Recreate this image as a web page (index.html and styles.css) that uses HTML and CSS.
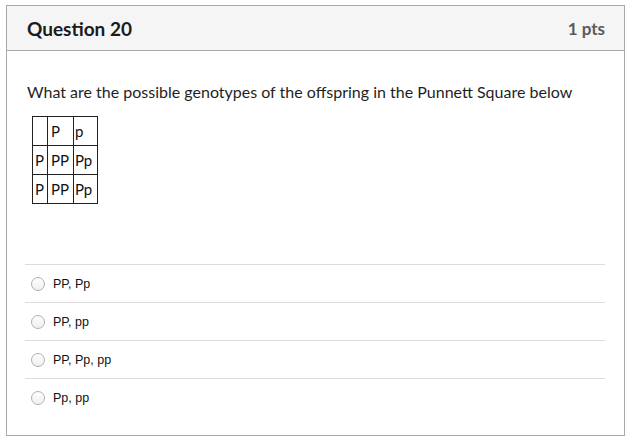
FILE: index.html
```html
<!DOCTYPE html>
<html>
<head>
<meta charset="utf-8">
<link rel="stylesheet" href="styles.css">
</head>
<body>
<div class="question">
  <div class="header">
    <h2 class="title">Question 20</h2>
    <span class="pts">1 pts</span>
  </div>
  <div class="body">
    <p class="prompt">What are the possible genotypes of the offspring in the Punnett Square below</p>
    <table class="punnett">
      <tr><td></td><td>P</td><td>p</td></tr>
      <tr><td>P</td><td>PP</td><td>Pp</td></tr>
      <tr><td>P</td><td>PP</td><td>Pp</td></tr>
    </table>
    <div class="answers">
      <label class="answer"><span class="radio"></span><span class="atext">PP, Pp</span></label>
      <label class="answer"><span class="radio"></span><span class="atext">PP, pp</span></label>
      <label class="answer"><span class="radio"></span><span class="atext">PP, Pp, pp</span></label>
      <label class="answer"><span class="radio"></span><span class="atext">Pp, pp</span></label>
    </div>
  </div>
</div>
</body>
</html>
```
FILE: styles.css
```css
html, body {
  margin: 0;
  padding: 0;
  background: #fff;
}
body {
  padding: 5px 0 0 6px;
  font-family: Lato, "Liberation Sans", sans-serif;
  color: #2d3b45;
}
.question {
  width: 619px;
  height: 431px;
  box-sizing: border-box;
  border: 1px solid #a8a8a8;
  display: flex;
  flex-direction: column;
}
.header {
  height: 45px;
  box-sizing: border-box;
  background: #f5f5f5;
  border-bottom: 1px solid #a8a8a8;
  display: flex;
  align-items: center;
  justify-content: space-between;
  padding: 0 19px 0 20px;
}
.title {
  margin: 0;
  font-size: 19px;
  font-weight: 700;
  color: #1b1b1b;
}
.pts {
  font-size: 17px;
  font-weight: 700;
  color: #5a5a5a;
}
.body {
  padding: 31px 19px 0 20px;
}
.prompt {
  margin: 0 0 14px 0;
  font-size: 16px;
  line-height: 20px;
  color: #1f1f1f;
}
.punnett {
  margin-left: 5px;
  border-collapse: collapse;
  font-size: 15px;
  color: #111;
}
.punnett td {
  border: 1px solid #222;
  height: 29px;
  text-align: left;
  box-sizing: border-box;
}
.punnett td:first-child {
  width: 15px;
  padding: 0 0 0 2px;
}
.punnett td:nth-child(2) {
  width: 26px;
  padding: 0 0 0 3px;
}
.punnett td:nth-child(3) {
  width: 24px;
  padding: 0 0 0 1px;
}
.answers {
  margin-top: 60px;
  margin-left: -2px;
}
.answer {
  display: flex;
  align-items: center;
  height: 38px;
  border-top: 1px solid #dcdcdc;
  box-sizing: border-box;
  padding-left: 6px;
}
.radio {
  width: 14px;
  height: 14px;
  border: 1px solid #b0b0b0;
  border-radius: 50%;
  box-sizing: border-box;
  background: linear-gradient(#fdfdfd, #f0f0f0);
  margin-right: 8px;
}
.atext {
  font-family: "Liberation Sans", Arial, sans-serif;
  font-size: 12.5px;
  color: #111;
}
```
